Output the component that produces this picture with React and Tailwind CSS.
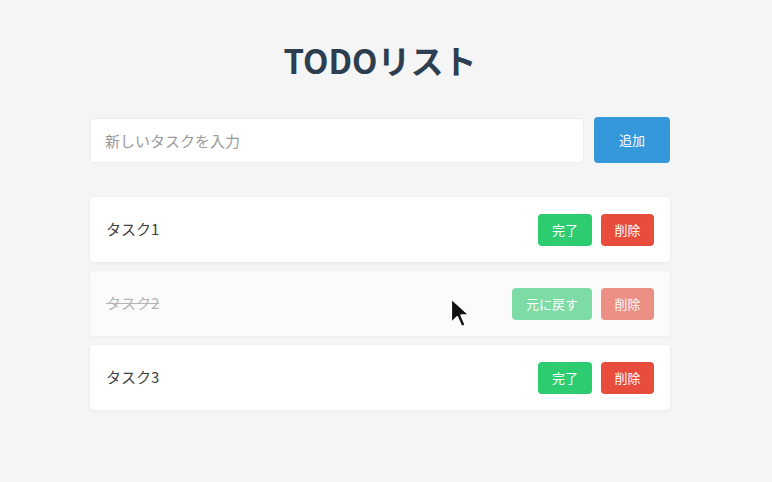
import React from "react";

const font = { fontFamily: '"Noto Sans CJK JP", "Noto Sans", sans-serif' };

function Item({ text, done }) {
  return (
    <div
      className={`flex items-center justify-between h-[65px] px-4 rounded bg-white shadow-[0_1px_4px_rgba(0,0,0,0.06)] ${done ? "opacity-60" : ""}`}
    >
      <span className={`text-[15px] ${done ? "line-through text-[#8a8a8a]" : "text-[#3f3f3f]"}`}>{text}</span>
      <div className="flex gap-[9px]">
        <button className="h-8 px-[14px] rounded bg-[#2ecc71] text-white text-[13px]">
          {done ? "元に戻す" : "完了"}
        </button>
        <button className="h-8 w-[53px] rounded bg-[#e74c3c] text-white text-[13px]">削除</button>
      </div>
    </div>
  );
}

export default function App() {
  return (
    <div className="relative w-[772px] h-[482px] bg-[#f5f5f5] overflow-hidden" style={font}>
      <div className="w-[580px] ml-[90px] pt-[40px]">
        <h1 className="text-[33px] leading-[40px] font-bold text-[#2c3e50] text-center">TODOリスト</h1>
        <div className="flex gap-[10px] mt-[38px]">
          <input
            className="flex-1 h-[45px] px-[14px] rounded bg-white border border-[#ececec] text-[15px] placeholder:text-[#9a9a9a] outline-none"
            placeholder="新しいタスクを入力"
          />
          <button className="w-[76px] h-[46px] -mt-px rounded bg-[#3498db] text-white text-[13px]">追加</button>
        </div>
        <div className="flex flex-col gap-[9px] mt-[34px]">
          <Item text="タスク1" />
          <Item text="タスク2" done />
          <Item text="タスク3" />
        </div>
      </div>
      <svg className="absolute left-[449px] top-[295px]" width="22" height="36" viewBox="0 0 20 30">
        <path
          d="M2 2 L2 24 L7.5 18.5 L11.5 27.5 L15 26 L11 17 L18.5 17 Z"
          fill="#111"
          stroke="#fff"
          strokeWidth="1.6"
          strokeLinejoin="round"
        />
      </svg>
    </div>
  );
}
